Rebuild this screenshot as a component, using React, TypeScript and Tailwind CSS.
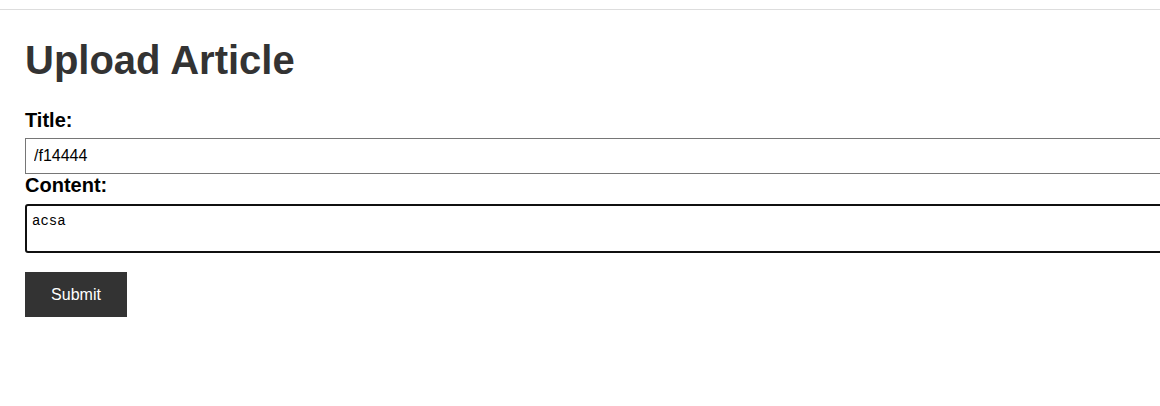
import React from "react";

export default function App() {
  return (
    <div className="w-[1160px] h-[406px] overflow-hidden bg-white font-['Liberation_Sans',Arial,sans-serif]">
      <div className="h-[10px] border-b border-[#dddddd]" />
      <div className="pl-[25px]">
        <h1 className="mt-[27px] text-[40px] leading-[46px] font-bold text-[#333333]">Upload Article</h1>
        <form className="flex flex-col items-start" onSubmit={(e) => e.preventDefault()}>
          <label className="mt-[26px] block text-[20px] leading-[23px] font-bold text-black">Title:</label>
          <input
            type="text"
            defaultValue="/f14444"
            className="mt-[6px] box-content w-full h-[18px] px-[8px] py-[8px] border border-[#767676] text-[16px] leading-[18px] text-black font-['Liberation_Sans',Arial,sans-serif] outline-none"
          />
          <label className="block text-[20px] leading-[23px] font-bold text-black">Content:</label>
          <textarea
            defaultValue="acsa"
            className="mt-[7px] box-content w-full h-[30px] pl-[5px] pr-[7px] pt-[8px] pb-[7px] border-2 border-[#101010] rounded-[3px] text-[14px] leading-[15px] text-black font-['Liberation_Mono','Courier_New',monospace] resize-none outline-none"
          />
          <button
            type="submit"
            className="mt-[19px] w-[102px] h-[45px] flex items-center justify-center bg-[#333333] text-white text-[16px]"
          >
            Submit
          </button>
        </form>
      </div>
    </div>
  );
}
